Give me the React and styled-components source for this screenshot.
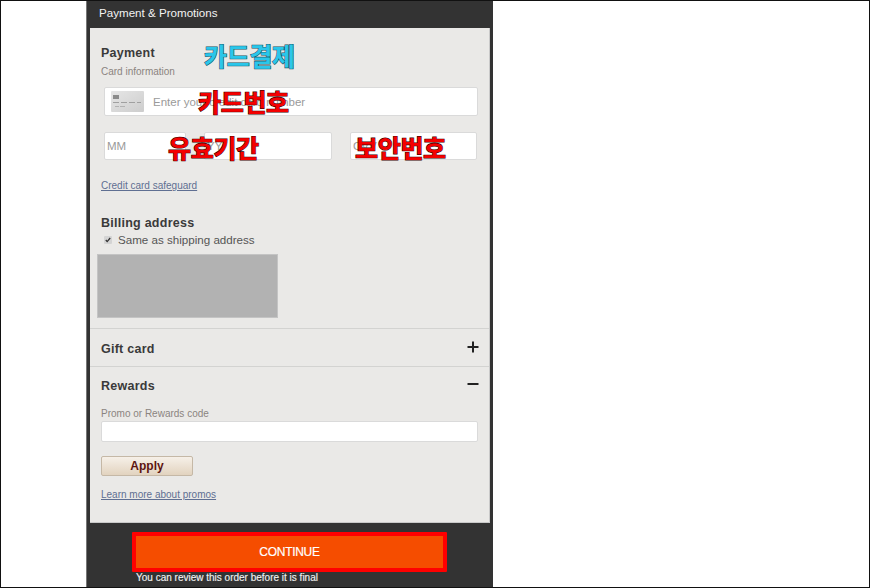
import React from 'react';
import styled, { createGlobalStyle } from 'styled-components';

const GlobalStyle = createGlobalStyle`
  html, body { margin: 0; padding: 0; background: #fff; }
  body { font-family: "Liberation Sans", Arial, sans-serif; }
`;

const Frame = styled.div`
  box-sizing: border-box;
  width: 870px;
  height: 588px;
  overflow: hidden;
  border: 1px solid #111;
  padding-left: 85px;
`;

const Column = styled.div`
  box-sizing: border-box;
  position: relative;
  width: 407px;
  height: 586px;
  background: #333;
  border-left: 1px solid #777;
  padding: 0 3px;
`;

const Header = styled.div`
  height: 27px;
  line-height: 24px;
  padding-left: 9px;
  font-size: 11.6px;
  color: #f2f2f2;
`;

const Panel = styled.div`
  background: #eae9e7;
  border: 1px solid #c9c9c9;
  border-width: 0 1px 1px 0;
  height: 494px;
`;

const Section = styled.div`
  box-sizing: border-box;
  padding: ${p => p.$pad};
  border-bottom: ${p => (p.$line ? '1px solid #d3d3d1' : 'none')};
  height: ${p => p.$h};
`;

const Heading = styled.div`
  font-size: 12.5px;
  line-height: 15px;
  font-weight: bold;
  letter-spacing: 0.25px;
  color: #3a3a3a;
  margin-top: ${p => p.$top || 0}px;
`;

const SmallLabel = styled.div`
  font-size: 10px;
  line-height: 13px;
  color: #8a847f;
  margin-top: ${p => p.$top || 0}px;
`;

const InputBox = styled.div`
  box-sizing: border-box;
  display: flex;
  align-items: center;
  flex-shrink: 0;
  background: #fff;
  border: 1px solid #dadada;
  border-radius: 2px;
  width: ${p => p.$w}px;
  height: ${p => p.$h}px;
  margin-top: ${p => p.$top || 0}px;
  margin-left: ${p => p.$gap || 0}px;
  padding-left: ${p => p.$left || 2}px;
  font-size: 11.5px;
  color: #9a9a9a;
`;

const CardRow = styled.div`
  margin: 9px 0 0 3px;
`;

const DateRow = styled.div`
  display: flex;
  margin: 16px 0 0 3px;
`;

const CardIcon = styled.svg`
  width: 33px;
  height: 21px;
  margin-right: 9px;
  flex-shrink: 0;
`;

const TextLink = styled.a`
  display: block;
  font-size: 10px;
  line-height: 13px;
  color: #5f6f92;
  text-decoration: underline;
  margin-top: ${p => p.$top}px;
`;

const CheckRow = styled.label`
  display: flex;
  align-items: center;
  margin: 2px 0 0 3px;
  font-size: 11.6px;
  line-height: 14px;
  color: #555;
`;

const CheckBox = styled.span`
  display: flex;
  align-items: center;
  justify-content: center;
  width: 8px;
  height: 8px;
  margin-right: 6px;
  background: #d4d4d4;
  border-radius: 1px;
`;

const AddressBlock = styled.div`
  box-sizing: border-box;
  width: 181px;
  height: 64px;
  margin: 7px 0 0 -4px;
  background: #b2b2b2;
  border: 1px solid #c4c4c4;
`;

const AccordionRow = styled.div`
  display: flex;
  align-items: center;
  justify-content: space-between;
`;

const Sign = styled.svg`
  width: 12px;
  height: 12px;
  margin-top: -5px;
`;

const ApplyButton = styled.button`
  display: block;
  box-sizing: border-box;
  width: 92px;
  height: 20px;
  margin-top: 14px;
  padding: 0;
  border: 1px solid #c5b8a6;
  border-radius: 2px;
  background: linear-gradient(#f6f0e8, #e2d3bf);
  font: bold 12px "Liberation Sans", Arial, sans-serif;
  color: #5c1410;
`;

const ContinueWrap = styled.div`
  margin: 9px 0 0 42px;
`;

const ContinueButton = styled.button`
  display: block;
  box-sizing: border-box;
  width: 315px;
  height: 40px;
  padding: 0 0 1px;
  background: #f54d00;
  border: 4px solid #ff0000;
  border-radius: 1px;
  font: 12px "Liberation Sans", Arial, sans-serif;
  letter-spacing: -0.3px;
  -webkit-text-stroke: 0.2px #fff;
  color: #fff;
`;

const Note = styled.div`
  font-size: 10px;
  line-height: 12px;
  margin-left: 4px;
  color: #f0f0f0;
  -webkit-text-stroke: 0.15px #f0f0f0;
`;

// hand-added captions that sit on top of the form
const Caption = styled.span`
  position: absolute;
  left: ${p => p.$x}px;
  top: ${p => p.$y}px;
  font-family: "Noto Sans CJK KR", sans-serif;
  font-size: 25px;
  line-height: 30px;
  font-weight: 700;
  white-space: nowrap;
  letter-spacing: -0.3px;
  color: ${p => (p.$blue ? '#2ac6ea' : '#f40000')};
  -webkit-text-stroke: 1.2px ${p => (p.$blue ? '#17535f' : '#3a0000')};
  paint-order: stroke fill;
`;

export default function App() {
  return (
    <>
      <GlobalStyle />
      <Frame>
        <Column>
          <Header>Payment &amp; Promotions</Header>
          <Panel>
            <Section $pad="18px 10px 0 11px" $h="301px" $line>
              <Heading>Payment</Heading>
              <SmallLabel $top={4}>Card information</SmallLabel>
              <CardRow>
                <InputBox $w={374} $h={29} $left={6}>
                  <CardIcon viewBox="0 0 33 21">
                    <defs>
                      <linearGradient id="cardFill" x1="0" y1="0" x2="1" y2="1">
                        <stop offset="0" stopColor="#e6e6e6" />
                        <stop offset="1" stopColor="#cdcdcd" />
                      </linearGradient>
                    </defs>
                    <rect width="33" height="21" rx="1" fill="url(#cardFill)" />
                    <rect x="2" y="4" width="6" height="4" fill="#8c8c8c" />
                    <path d="M2 11.5h6M10 11.5h6M18 11.5h6M26 11.5h4" stroke="#a0a0a0" strokeWidth="1.2" />
                    <path d="M4 15.5h4M9 15.5h5" stroke="#b2b2b2" strokeWidth="1" />
                  </CardIcon>
                  Enter your credit card number
                </InputBox>
              </CardRow>
              <DateRow>
                <InputBox $w={82} $h={28}>MM</InputBox>
                <InputBox $w={128} $h={28} $gap={18}>YY</InputBox>
                <InputBox $w={127} $h={28} $gap={18}>CVV</InputBox>
              </DateRow>
              <TextLink $top={19}>Credit card safeguard</TextLink>
              <Heading $top={24}>Billing address</Heading>
              <CheckRow>
                <CheckBox>
                  <svg width="6" height="6" viewBox="0 0 6 6">
                    <path d="M0.8 3l1.4 1.6L5.2 1" fill="none" stroke="#333" strokeWidth="1.3" />
                  </svg>
                </CheckBox>
                Same as shipping address
              </CheckRow>
              <AddressBlock />
            </Section>
            <Section $pad="13px 10px 0 11px" $h="38px" $line>
              <AccordionRow>
                <Heading>Gift card</Heading>
                <Sign viewBox="0 0 12 12">
                  <path d="M0.5 6h11M6 0.5v11" stroke="#222" strokeWidth="2" />
                </Sign>
              </AccordionRow>
            </Section>
            <Section $pad="12px 10px 0 11px" $h="154px">
              <AccordionRow>
                <Heading>Rewards</Heading>
                <Sign viewBox="0 0 12 12">
                  <path d="M0.5 6h11" stroke="#222" strokeWidth="2" />
                </Sign>
              </AccordionRow>
              <SmallLabel $top={13}>Promo or Rewards code</SmallLabel>
              <InputBox $w={377} $h={21} $top={1} />
              <ApplyButton>Apply</ApplyButton>
              <TextLink $top={12}>Learn more about promos</TextLink>
            </Section>
          </Panel>
          <ContinueWrap>
            <ContinueButton>CONTINUE</ContinueButton>
            <Note>You can review this order before it is final</Note>
          </ContinueWrap>
          <Caption $blue $x={117} $y={39}>카드결제</Caption>
          <Caption $x={111} $y={85}>카드번호</Caption>
          <Caption $x={81} $y={131}>유효기간</Caption>
          <Caption $x={268} $y={131}>보안번호</Caption>
        </Column>
      </Frame>
    </>
  );
}
